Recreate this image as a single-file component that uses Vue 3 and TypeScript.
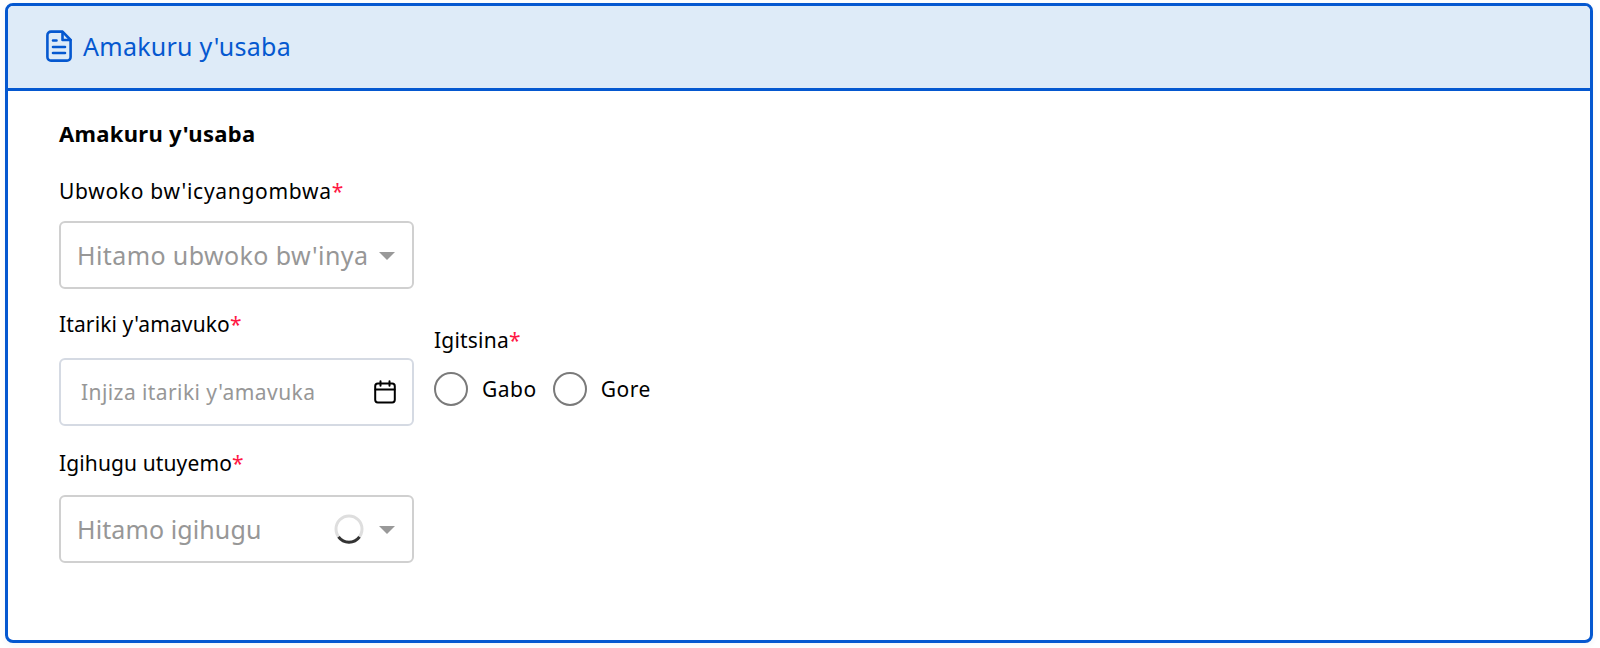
<script setup lang="ts">
const required = '*'
</script>

<template>
  <div class="page">
    <section class="card">
      <header class="card-head">
        <svg class="doc" viewBox="0 0 26 32" fill="none" stroke="#0558d0" stroke-width="2.6" stroke-linejoin="round" stroke-linecap="round">
          <path d="M5 1.6h11.5L24.6 10v17a3.6 3.6 0 0 1-3.6 3.6H5A3.6 3.6 0 0 1 1.4 27V5.2A3.6 3.6 0 0 1 5 1.6z" />
          <path d="M16.5 2v8h8" />
          <path d="M7 10.5h3.5M7 17h12M7 23h12" />
        </svg>
        <h1>Amakuru y'usaba</h1>
      </header>
      <div class="card-body">
        <h2>Amakuru y'usaba</h2>
        <div class="field first">
          <label>Ubwoko bw'icyangombwa<span class="req">{{ required }}</span></label>
          <div class="select">
            <span class="ph">Hitamo ubwoko bw'inya</span>
            <i class="caret"></i>
          </div>
        </div>
        <div class="row">
          <div class="field date">
            <label>Itariki y'amavuko<span class="req">{{ required }}</span></label>
            <div class="input">
              <span class="ph small">Injiza itariki y'amavuka</span>
              <svg class="cal" viewBox="0 0 22 24" fill="none" stroke="#000" stroke-width="2" stroke-linecap="round" stroke-linejoin="round">
                <rect x="1.2" y="3.6" width="19.6" height="18.8" rx="2.6" />
                <path d="M1.5 9.5h19M6.5 1.2v4.6M15.5 1.2v4.6" />
              </svg>
            </div>
          </div>
          <div class="gender">
            <label>Igitsina<span class="req">{{ required }}</span></label>
            <div class="radios">
              <span class="radio"></span><span class="opt">Gabo</span>
              <span class="radio"></span><span class="opt">Gore</span>
            </div>
          </div>
        </div>
        <div class="field country">
          <label>Igihugu utuyemo<span class="req">{{ required }}</span></label>
          <div class="select">
            <span class="ph tight">Hitamo igihugu</span>
            <svg class="spin" viewBox="0 0 30 30" fill="none" stroke-width="3">
              <circle cx="15" cy="15" r="13" stroke="#dedede" />
              <path d="M4.5 22.8a13 13 0 0 0 21 0" stroke="#333" />
            </svg>
            <i class="caret"></i>
          </div>
        </div>
      </div>
    </section>
  </div>
</template>

<style>
html, body { margin: 0; background: #fff; }
</style>

<style scoped>
.page {
  width: 1600px;
  height: 648px;
  padding: 3px 7px 5px 5px;
  box-sizing: border-box;
  font-family: "Noto Sans", "Open Sans", sans-serif;
  color: #000;
}
.card {
  height: 640px;
  box-sizing: border-box;
  border: 3px solid #0558d0;
  border-radius: 8px;
  overflow: hidden;
  background: #fff;
  box-shadow: 0 2px 6px rgba(0, 60, 120, 0.06);
}
.card-head {
  height: 80px;
  padding-bottom: 2px;
  box-sizing: content-box;
  background: #deebf8;
  border-bottom: 3px solid #0558d0;
  display: flex;
  align-items: center;
  padding-left: 38px;
  gap: 11px;
}
.doc { width: 26px; height: 32px; flex: none; }
h1 {
  margin: 0;
  font-size: 25px;
  letter-spacing: 0.27px;
  font-weight: 400;
  color: #0558d0;
}
.card-body { padding: 27px 0 0 51px; }
h2 {
  margin: 0;
  font-size: 22px;
  letter-spacing: 0.3px;
  line-height: 30px;
  font-weight: 700;
}
label {
  display: block;
  font-size: 21px;
  letter-spacing: 0.12px;
  line-height: 26px;
  white-space: nowrap;
}
.first label { letter-spacing: 0.7px; }
.gender label { letter-spacing: 0.2px; }
.req { color: #ff1744; }
.field { width: 355px; }
.first { margin-top: 30px; }
.first label { margin-bottom: 17px; }
.select, .input {
  height: 68px;
  box-sizing: border-box;
  background: #fff;
  display: flex;
  align-items: center;
  border-radius: 6px;
}
.select {
  border: 2px solid #d0d0d0;
  padding: 0 17px 0 16px;
}
.input {
  border: 2px solid #d5dae3;
  padding: 0 16px 0 20px;
}
.ph {
  flex: 1;
  white-space: nowrap;
  font-size: 25px;
  letter-spacing: 0.4px;
  color: #979797;
  overflow: hidden;
}
.ph.small { font-size: 21px; letter-spacing: 0.42px; }
.ph.tight { letter-spacing: 0.1px; }
.caret {
  flex: none;
  width: 0;
  height: 0;
  border-left: 8px solid transparent;
  border-right: 8px solid transparent;
  border-top: 8px solid #999;
  margin-top: 2px;
}
.cal { width: 22px; height: 24px; flex: none; }
.spin { width: 30px; height: 30px; flex: none; margin-right: 15px; }
.row {
  display: flex;
  align-items: center;
  gap: 20px;
  margin-top: 22px;
}
.date label { margin-bottom: 21px; }
.gender { margin-bottom: 5px; }
.gender label { margin-bottom: 19px; }
.radios {
  display: flex;
  align-items: center;
}
.radio {
  width: 34px;
  height: 34px;
  box-sizing: border-box;
  border: 2px solid #7a7a7a;
  border-radius: 50%;
  margin-right: 14px;
}
.opt { font-size: 21px; letter-spacing: 0.5px; margin-right: 16px; }
.country { margin-top: 24px; }
.country label { margin-bottom: 19px; }
</style>
